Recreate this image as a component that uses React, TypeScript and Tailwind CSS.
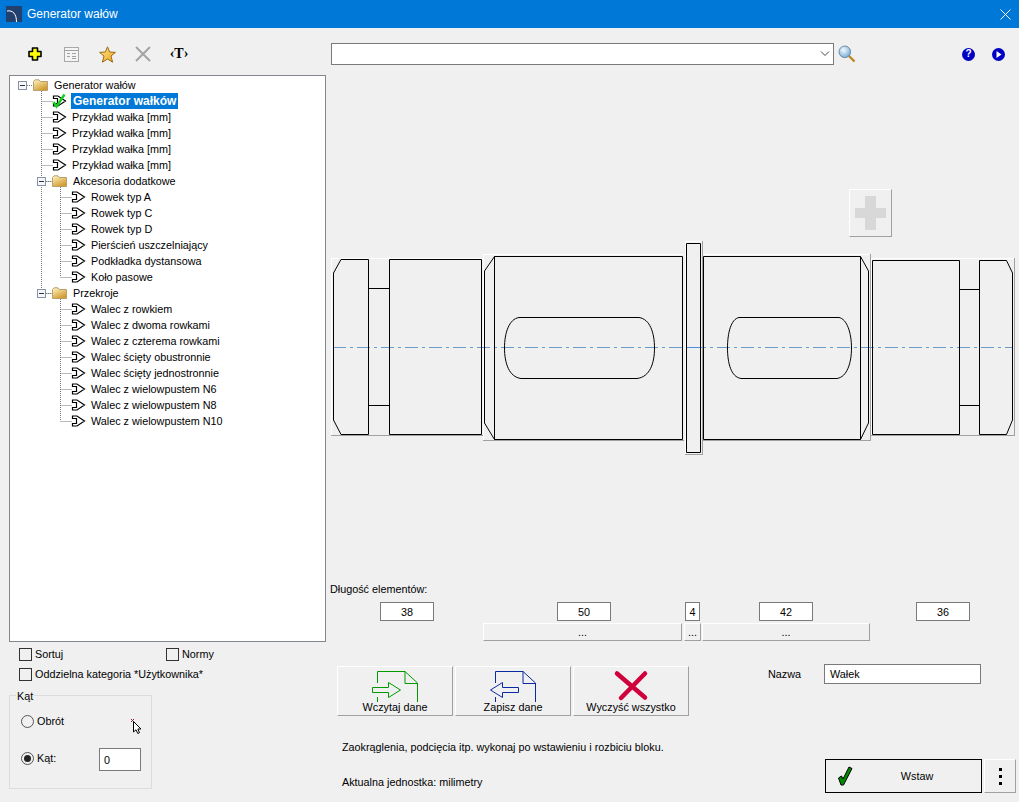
const Shape = ({ check = false }: { check?: boolean }) => (
  <svg width="15" height="16" viewBox="0 0 15 16" className="shrink-0 overflow-visible">
    <path d="M1.5 3 H6 L13.5 8 L6 13 H1.5 V10.5 H5.5 V5.5 H1.5 Z" fill="#fff" stroke="#000" strokeWidth="1.2" />
    {check && <path d="M1.5 9 L4.5 13.5 L12.5 1.5" fill="none" stroke="#10d020" strokeWidth="2.4" />}
  </svg>
)

const Folder = () => (
  <svg width="15" height="12" viewBox="0 0 15 12" className="shrink-0">
    <defs>
      <linearGradient id="folderFill" x1="0" y1="0" x2="0.6" y2="1">
        <stop offset="0" stopColor="#fff6c8" />
        <stop offset="1" stopColor="#d29a2c" />
      </linearGradient>
    </defs>
    <path d="M0.5 2.5 L2 0.8 H6 L7.5 2.5 H14.5 V11.5 H0.5 Z" fill="url(#folderFill)" stroke="#b8a070" strokeWidth="1" />
  </svg>
)

const TreeRow = ({ pad, label, kind, selected }: { pad: number; label: string; kind: 'folder' | 'item' | 'check'; selected?: boolean }) => (
  <div className="flex h-4 items-center" style={{ paddingLeft: pad }}>
    {kind === 'folder' ? <Folder /> : <Shape check={kind === 'check'} />}
    {selected ? (
      <span className="ml-[4px] flex h-4 items-center bg-[#0078d7] px-[2px] text-[12px] font-bold text-white">{label}</span>
    ) : (
      <span className={kind === 'folder' ? 'ml-[6px]' : 'ml-[5px]'}>{label}</span>
    )}
  </div>
)

const TreeLines = () => {
  const level1 = [101, 117, 133, 149, 165, 181, 293]
  const level2 = [197, 213, 229, 245, 261, 277, 309, 325, 341, 357, 373, 389, 405, 421]
  return (
    <svg className="pointer-events-none absolute inset-0" width="315" height="565" viewBox="10 76 315 565">
      <g stroke="#777" strokeDasharray="1 1" fill="none">
        <path d="M27 85.5 H33" />
        <path d="M41.5 91 V288" />
        {level1.map((y) => (
          <path key={y} d={`M41.5 ${y + 0.5} H${y === 181 || y === 293 ? 52 : 53}`} />
        ))}
        <path d="M60.5 187 V277 M60.5 299 V421" />
        {level2.map((y) => (
          <path key={y} d={`M60.5 ${y + 0.5} H72`} />
        ))}
        <path d="M46 181.5 H52 M46 293.5 H52" />
      </g>
      {[
        [18, 81],
        [37, 177],
        [37, 289],
      ].map(([x, y]) => (
        <g key={y}>
          <rect x={x + 0.5} y={y + 0.5} width="8" height="8" fill="#f4f6f8" stroke="#8794a8" />
          <path d={`M${x + 2} ${y + 4.5} H${x + 7}`} stroke="#333" />
        </g>
      ))}
    </svg>
  )
}

const Checkbox = ({ label }: { label: string }) => (
  <label className="flex items-center gap-[3px]">
    <span className="h-[13px] w-[13px] border border-[#333] bg-[#f0f0f0]" />
    <span>{label}</span>
  </label>
)

const Radio = ({ checked }: { checked?: boolean }) => (
  <span className="flex h-[13px] w-[13px] shrink-0 items-center justify-center rounded-full border border-[#555] bg-[#f0f0f0]">
    {checked && <span className="h-[7px] w-[7px] rounded-full bg-[#222]" />}
  </span>
)

const Raised = ({ className, children }: { className: string; children?: React.ReactNode }) => (
  <div className={`flex border-t border-l border-t-white border-l-white border-r border-b border-r-[#a0a0a0] border-b-[#a0a0a0] ${className}`}>
    {children}
  </div>
)

const NumBox = ({ value, className }: { value: string; className: string }) => (
  <div className={`flex h-[19px] items-center justify-center border border-[#7a7a7a] bg-white ${className}`}>{value}</div>
)

const Slot = ({ d }: { d: string }) => <path d={d} fill="none" stroke="#000" />

const ShaftDrawing = () => (
  <svg width="689" height="220" viewBox="330 240 689 220" shapeRendering="crispEdges" className="mt-[3px] block">
    {/* button outlines */}
    <g fill="none">
      <path d="M331.5 436 V258.5 H482.5" stroke="#fff" />
      <path d="M331 435.5 H483" stroke="#a0a0a0" />
      <path d="M483.5 441 V254.5 H683" stroke="#fff" />
      <path d="M483 440.5 H684" stroke="#a0a0a0" />
      <path d="M685.5 454 V241.5 H701" stroke="#fff" />
      <path d="M685 454.5 H702 V241" stroke="#a0a0a0" />
      <path d="M703 254.5 H869" stroke="#fff" />
      <path d="M703 440.5 H870.5 V254" stroke="#a0a0a0" />
      <path d="M871.5 436 V258.5 H1014" stroke="#fff" />
      <path d="M871 435.5 H1014.5 V258" stroke="#a0a0a0" />
    </g>
    <path d="M333 347.5 H1012" stroke="#6a9ad0" strokeDasharray="13 4 3 4" />
    <path d="M687 347.5 H700" stroke="#4a90e0" />
    <g shapeRendering="auto">
      <Slot d="M333.5 273 L341 259.5 H368.5 V434.5 H341 L333.5 420 Z" />
      <Slot d="M368.5 288.5 H389.5 M368.5 405.5 H389.5" />
      <Slot d="M389.5 259.5 H481.5 V434.5 H389.5 Z" />
      <Slot d="M484.5 271 L494.5 256.5 V439.5 L484.5 423 Z" />
      <Slot d="M494.5 256.5 H682.5 V439.5 H494.5 Z" />
      <Slot d="M519 317.5 H639 C650 319 654.5 333 654.5 348 C654.5 363 650 377 637 378.5 H521 C509 377 504.5 363 504.5 348 C504.5 333 509 319 519 317.5 Z" />
      <Slot d="M686.5 243.5 H700.5 V452.5 H686.5 Z" />
      <Slot d="M703.5 256.5 H860.5 V439.5 H703.5 Z" />
      <Slot d="M860.5 256.5 L868.5 271 V423 L860.5 439.5" />
      <Slot d="M739 317.5 H839 C847 319 851.5 333 851.5 348 C851.5 363 847 377 837 378.5 H741 C731 377 727.5 363 727.5 348 C727.5 333 731 319 739 317.5 Z" />
      <Slot d="M872.5 260.5 H959.5 V434.5 H872.5 Z" />
      <Slot d="M959.5 289.5 H979.5 M959.5 405.5 H979.5" />
      <Slot d="M979.5 260.5 H1006.5 L1012.5 273 V420 L1006.5 434.5 H979.5 Z" />
    </g>
  </svg>
)

const App = () => {
  return (
    <div className="flex h-[802px] w-[1019px] flex-col overflow-hidden bg-[#f0f0f0] font-['Liberation_Sans',sans-serif] text-[10.8px] leading-[14px] text-black">
      {/* title bar */}
      <div className="flex h-[28px] shrink-0 items-center bg-[#0078d7] pl-[6px] pr-[8px] text-[12px] text-white">
        <svg width="16" height="16" viewBox="0 0 16 16">
          <rect width="16" height="16" fill="#22406e" />
          <path d="M1 5 C7 4 10.5 8 10.5 16" fill="none" stroke="#fff" strokeWidth="1" />
        </svg>
        <span className="ml-[5px] flex-1">Generator wałów</span>
        <svg width="11" height="11" viewBox="0 0 11 11">
          <path d="M0.5 0.5 L10.5 10.5 M10.5 0.5 L0.5 10.5" stroke="#fff" />
        </svg>
      </div>

      <div className="flex flex-1">
        {/* left column */}
        <div className="w-[330px] shrink-0 pl-[9px]">
          <div className="mt-[12px] flex h-[28px] items-center pl-[8px]">
            <div className="flex w-[36px] justify-center">
              <svg width="14" height="14" viewBox="0 0 14 14">
                <path d="M4.5 1 H9.5 V4.5 H13 V9.5 H9.5 V13 H4.5 V9.5 H1 V4.5 H4.5 Z" fill="#ffff00" stroke="#000" strokeWidth="1.6" strokeLinejoin="round" />
              </svg>
            </div>
            <div className="flex w-[36px] justify-center">
              <svg width="15" height="15" viewBox="0 0 15 15">
                <rect x="0.5" y="0.5" width="14" height="14" fill="#f4f4f4" stroke="#a8a8a8" />
                <path d="M1 3.5 H14 M3 6.5 H6 M8 6.5 H12 M3 9.5 H6 M8 9.5 H12 M8 11.5 H12" stroke="#a0a0a0" />
              </svg>
            </div>
            <div className="flex w-[36px] justify-center">
              <svg width="17" height="17" viewBox="0 0 17 17">
                <defs>
                  <linearGradient id="starFill" x1="0" y1="0" x2="1" y2="1">
                    <stop offset="0" stopColor="#ffe98a" />
                    <stop offset="1" stopColor="#eea020" />
                  </linearGradient>
                </defs>
                <path d="M8.5 0.8 L10.6 6 L16.4 6.4 L12 10 L13.6 16.2 L8.5 13 L3.4 16.2 L5 10 L0.6 6.4 L6.4 6 Z" fill="url(#starFill)" stroke="#9a6a10" />
              </svg>
            </div>
            <div className="flex w-[36px] justify-center">
              <svg width="16" height="16" viewBox="0 0 16 16">
                <path d="M1 1 L15 15 M15 1 L1 15" stroke="#a4a4a4" strokeWidth="2" />
              </svg>
            </div>
            <div className="flex w-[36px] items-center justify-center font-['Liberation_Serif',serif] text-[14px] font-bold">‹T›</div>
          </div>

          <div className="relative mt-[7px] h-[567px] w-[317px] border border-[#828790] bg-white pt-[1px]">
            <TreeLines />
            <div className="relative">
              <TreeRow pad={23} label="Generator wałów" kind="folder" />
              <TreeRow pad={42} label="Generator wałków" kind="check" selected />
              <TreeRow pad={42} label="Przykład wałka [mm]" kind="item" />
              <TreeRow pad={42} label="Przykład wałka [mm]" kind="item" />
              <TreeRow pad={42} label="Przykład wałka [mm]" kind="item" />
              <TreeRow pad={42} label="Przykład wałka [mm]" kind="item" />
              <TreeRow pad={42} label="Akcesoria dodatkowe" kind="folder" />
              <TreeRow pad={61} label="Rowek typ A" kind="item" />
              <TreeRow pad={61} label="Rowek typ C" kind="item" />
              <TreeRow pad={61} label="Rowek typ D" kind="item" />
              <TreeRow pad={61} label="Pierścień uszczelniający" kind="item" />
              <TreeRow pad={61} label="Podkładka dystansowa" kind="item" />
              <TreeRow pad={61} label="Koło pasowe" kind="item" />
              <TreeRow pad={42} label="Przekroje" kind="folder" />
              <TreeRow pad={61} label="Walec z rowkiem" kind="item" />
              <TreeRow pad={61} label="Walec z dwoma rowkami" kind="item" />
              <TreeRow pad={61} label="Walec z czterema rowkami" kind="item" />
              <TreeRow pad={61} label="Walec ścięty obustronnie" kind="item" />
              <TreeRow pad={61} label="Walec ścięty jednostronnie" kind="item" />
              <TreeRow pad={61} label="Walec z wielowpustem N6" kind="item" />
              <TreeRow pad={61} label="Walec z wielowpustem N8" kind="item" />
              <TreeRow pad={61} label="Walec z wielowpustem N10" kind="item" />
            </div>
          </div>

          <div className="mt-[5px] flex h-[14px] items-center pl-[10px]">
            <div className="w-[147px]">
              <Checkbox label="Sortuj" />
            </div>
            <Checkbox label="Normy" />
          </div>
          <div className="mt-[6px] flex h-[14px] items-center pl-[10px]">
            <Checkbox label="Oddzielna kategoria *Użytkownika*" />
          </div>

          <div className="relative mt-[14px] h-[94px] w-[143px] border border-[#dcdcdc] pl-[11px] pt-[18px]">
            <span className="absolute left-[6px] top-[-7px] bg-[#f0f0f0] px-px">Kąt</span>
            <div className="flex h-[14px] items-center gap-[3px]">
              <Radio />
              <span>Obrót</span>
            </div>
            <div className="mt-[20px] flex h-[23px] items-center">
              <div className="flex w-[78px] items-center gap-[3px] pb-[3px]">
                <Radio checked />
                <span>Kąt:</span>
              </div>
              <div className="flex h-[23px] w-[42px] items-center border border-[#7a7a7a] bg-white pl-[4px]">0</div>
            </div>
            <svg className="absolute left-[120px] top-[22px]" width="14" height="18" viewBox="0 0 14 18">
              <path d="M1 1 L4 4 M4 1 L1 4" stroke="#a01030" />
              <path d="M3.5 3.5 V14 L6 11.8 L7.8 15.5 L9.5 14.7 L7.8 11 L11 11 Z" fill="#fff" stroke="#000" />
            </svg>
          </div>
        </div>

        {/* right column */}
        <div className="min-w-0 flex-1">
          <div className="mt-[15px] flex h-[22px] items-center">
            <div className="ml-px flex h-[22px] w-[503px] items-center justify-end border border-[#7a7a7a] bg-white pr-[3px]">
              <svg width="10" height="6" viewBox="0 0 10 6">
                <path d="M1 0.5 L5 4.5 L9 0.5" fill="none" stroke="#444" />
              </svg>
            </div>
            <svg width="18" height="18" viewBox="0 0 18 18" className="ml-[4px]">
              <defs>
                <radialGradient id="lens" cx="0.4" cy="0.35" r="0.7">
                  <stop offset="0" stopColor="#f4fbff" />
                  <stop offset="1" stopColor="#6fa8d8" />
                </radialGradient>
              </defs>
              <path d="M10.5 10.5 L16.5 16.5" stroke="#b88a20" strokeWidth="2.4" />
              <circle cx="6.8" cy="6.8" r="5.8" fill="url(#lens)" stroke="#6c8ea8" />
            </svg>
            <svg width="13" height="13" viewBox="0 0 13 13" className="ml-[106px]">
              <circle cx="6.5" cy="6.5" r="6.5" fill="#0000c4" />
            </svg>
            <span className="relative -ml-[13px] w-[13px] text-center text-[10px] font-bold text-white">?</span>
            <svg width="13" height="13" viewBox="0 0 13 13" className="ml-[17px]">
              <circle cx="6.5" cy="6.5" r="6.5" fill="#0000c4" />
              <path d="M4.5 3 L9.5 6.5 L4.5 10 Z" fill="#fff" />
            </svg>
          </div>

          <Raised className="ml-[519px] mt-[124px] h-[48px] w-[43px] items-center justify-center">
            <svg width="31" height="34" viewBox="0 0 31 34">
              <path d="M10 0 H21 V12 H31 V22 H21 V34 H10 V22 H0 V12 H10 Z" fill="#d8d8d8" />
            </svg>
          </Raised>

          <ShaftDrawing />

          <div className="mt-[122px]">Długość elementów:</div>
          <div className="mt-[6px] flex">
            <NumBox value="38" className="ml-[50px] w-[54px]" />
            <NumBox value="50" className="ml-[123px] w-[54px]" />
            <NumBox value="4" className="ml-[74px] w-[15px]" />
            <NumBox value="42" className="ml-[59px] w-[54px]" />
            <NumBox value="36" className="ml-[103px] w-[54px]" />
          </div>
          <div className="mt-[2px] flex">
            <Raised className="ml-[153px] h-[18px] w-[199px] items-center justify-center">...</Raised>
            <Raised className="ml-[2px] h-[18px] w-[17px] items-center justify-center">...</Raised>
            <Raised className="ml-px h-[18px] w-[168px] items-center justify-center">...</Raised>
          </div>

          <div className="mt-[25px] flex items-start">
            <div className="ml-[7px] w-[352px]">
              <div className="flex gap-[2px]">
                <Raised className="h-[50px] w-[116px] flex-col items-center pt-[3px]">
                  <svg width="50" height="32" viewBox="370 670 50 32">
                    <path d="M377.5 683 V671.5 H405 L417.5 683 V702 M405 671.5 V683.5 H417.5 M377.5 697 V702" fill="none" stroke="#009a00" />
                    <path d="M372.5 687.5 H388.5 V682.5 L400.5 690 L388.5 697.5 V692.5 H372.5 Z" fill="#f0f0f0" stroke="#009a00" />
                  </svg>
                  <span className="-mt-[2px]">Wczytaj dane</span>
                </Raised>
                <Raised className="h-[50px] w-[116px] flex-col items-center pt-[3px]">
                  <svg width="50" height="32" viewBox="488 670 50 32">
                    <path d="M495.5 683 V671.5 H523 L535.5 683 V702 M523 671.5 V683.5 H535.5 M495.5 697 V702" fill="none" stroke="#0a2aa0" />
                    <path d="M518.5 687.5 H502.5 V682.5 L490.5 690 L502.5 697.5 V692.5 H518.5 Z" fill="#f0f0f0" stroke="#0a2aa0" />
                  </svg>
                  <span className="-mt-[2px]">Zapisz dane</span>
                </Raised>
                <Raised className="h-[50px] w-[116px] flex-col items-center pt-[3px]">
                  <svg width="50" height="32" viewBox="606 670 50 32">
                    <path d="M617 673.5 L645 697.5 M645 673.5 L621 698" fill="none" stroke="#d0003c" strokeWidth="4.5" strokeLinecap="round" />
                  </svg>
                  <span className="-mt-[2px]">Wyczyść wszystko</span>
                </Raised>
              </div>
              <div className="mt-[24px] whitespace-nowrap pl-[5px]">Zaokrąglenia, podcięcia itp. wykonaj po wstawieniu i rozbiciu bloku.</div>
              <div className="mt-[21px] pl-[5px]">Aktualna jednostka: milimetry</div>
            </div>

            <div className="-mt-[2px] ml-[79px]">
              <div className="flex items-center">
                <span className="w-[56px]">Nazwa</span>
                <div className="flex h-[20px] w-[157px] items-center border border-[#7a7a7a] bg-white pl-[5px]">Wałek</div>
              </div>
              <div className="mt-[75px] ml-[57px] flex">
                <div className="flex h-[34px] w-[157px] items-center border border-black pl-[11px]">
                  <svg width="16" height="20" viewBox="0 0 16 20">
                    <path d="M1.5 12 L4.5 10 L6 13 L12 1 L15 2.5 L6.5 19 L4 19 Z" fill="#008a00" stroke="#000" />
                  </svg>
                  <span className="flex-1 text-center">Wstaw</span>
                </div>
                <Raised className="ml-[2px] h-[34px] w-[32px] flex-col items-center justify-center gap-[4px]">
                  <span className="h-[3px] w-[3px] bg-black" />
                  <span className="h-[3px] w-[3px] bg-black" />
                  <span className="h-[3px] w-[3px] bg-black" />
                </Raised>
              </div>
            </div>
          </div>
        </div>
      </div>
    </div>
  )
}

export default App
